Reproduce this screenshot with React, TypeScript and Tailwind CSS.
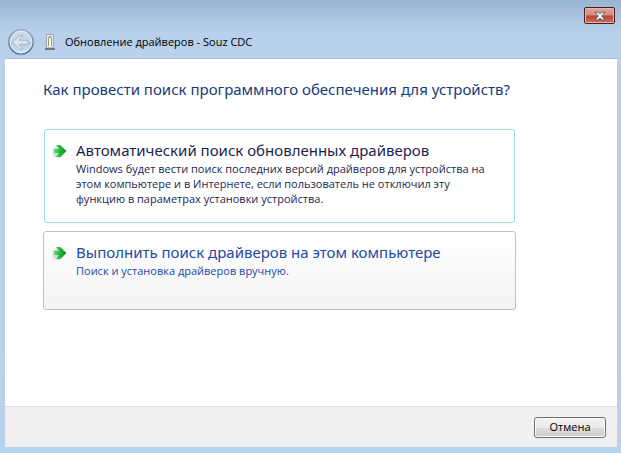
import type { ReactNode } from "react";

function BackIcon() {
  return (
    <svg viewBox="0 0 28 28" className="size-7" aria-hidden="true">
      <defs>
        <linearGradient id="orb" x1="0" y1="0" x2="0" y2="1">
          <stop offset="0" stopColor="#d3deea" />
          <stop offset="0.48" stopColor="#c3d3e5" />
          <stop offset="0.52" stopColor="#b2c8df" />
          <stop offset="1" stopColor="#d3e5f5" />
        </linearGradient>
        <linearGradient id="rim" x1="0" y1="0" x2="0" y2="1">
          <stop offset="0" stopColor="#8fa6c0" />
          <stop offset="1" stopColor="#4b617c" />
        </linearGradient>
      </defs>
      <circle cx="14" cy="14" r="13" fill="none" stroke="#a3bad3" strokeWidth="1" />
      <circle cx="14" cy="14" r="12" fill="url(#orb)" stroke="url(#rim)" strokeWidth="1.2" />
      <circle cx="14" cy="14" r="10.8" fill="none" stroke="#e2ecf6" strokeWidth="1" />
      <path
        d="M5.5 14.2 12.6 7.4h3.2l-4 4.9h9.4v3.9h-9.4l4 4.9h-3.2z"
        fill="#dce6f0"
        stroke="#9fb2c7"
        strokeWidth="0.9"
        strokeLinejoin="round"
      />
    </svg>
  );
}

function DeviceIcon() {
  return (
    <svg viewBox="0 0 10 16" className="h-4 w-[10px]" aria-hidden="true">
      <rect x="1.5" y="0.5" width="7" height="13" fill="#eeeeea" stroke="#a2a5a2" />
      <path d="M3.5 12V4.2Q3.5 2.5 5 2.5T6.5 4.2V12" fill="#fafaf6" stroke="#8d9a7c" />
      <path d="M4 3.2h2" stroke="#6fae4b" strokeWidth="1.2" />
      <path d="M1 13.5h8" stroke="#b9bbb9" />
      <path d="M0 15h10" stroke="#4d5257" strokeWidth="1.4" />
    </svg>
  );
}

function ArrowIcon() {
  return (
    <svg viewBox="0 0 18 18" className="mt-[2px] size-[18px] shrink-0" aria-hidden="true">
      <defs>
        <linearGradient id="green" x1="0" y1="0" x2="1" y2="0">
          <stop offset="0" stopColor="#5fe06a" />
          <stop offset="0.5" stopColor="#22b534" />
          <stop offset="1" stopColor="#0c8a1d" />
        </linearGradient>
        <radialGradient id="shade">
          <stop offset="0" stopColor="#c4cac4" />
          <stop offset="0.6" stopColor="#dcdfdc" />
          <stop offset="1" stopColor="#ffffff" stopOpacity="0" />
        </radialGradient>
      </defs>
      <circle cx="8" cy="10" r="8" fill="url(#shade)" />
      <path d="M4 7h5L6 3h4.2L16.5 9l-6.3 6H6l3-4H4z" fill="url(#green)" />
    </svg>
  );
}

function CommandLink({
  title,
  children,
  className,
}: {
  title: string;
  children: ReactNode;
  className: string;
}) {
  return (
    <button type="button" className={`flex items-start rounded-[3px] border pt-[10px] pr-4 text-left ${className}`}>
      <ArrowIcon />
      <span className="ml-2 block flex-1">
        <span className="block font-['Noto_Sans',sans-serif] text-[15px] leading-5">{title}</span>
        <span className="mt-px block text-[11px] leading-[15px]">{children}</span>
      </span>
    </button>
  );
}

export default function App() {
  return (
    <div className="flex min-h-screen flex-col bg-[linear-gradient(to_bottom,#98b4d1_0px,#b8d0eb_32px,#b9d1ea_440px,#b2d5f1_453px)] pr-1 pb-[6px] pl-[5px] font-['Open_Sans','Noto_Sans',sans-serif] text-black">
      <header>
        <div className="flex justify-end px-0.5 pt-[7px]">
          <button
            type="button"
            aria-label="Закрыть"
            className="flex h-[17px] w-[31px] items-center justify-center rounded-[2px] border border-[#4b1a22] bg-[linear-gradient(to_bottom,#e3a59b_0%,#d58a7e_48%,#b9432c_52%,#d0705c_100%)] shadow-[inset_0_0_0_1px_#e8b5ac]"
          >
            <svg viewBox="0 0 12 10" className="h-[10px] w-3" aria-hidden="true">
              <path
                d="M1 1h3.2L6 2.9 7.8 1H11L7.8 5 11 9H7.8L6 7.1 4.2 9H1l3.2-4z"
                fill="#f6f6f6"
                stroke="#535666"
                strokeWidth="0.9"
              />
            </svg>
          </button>
        </div>
        <div className="flex h-[34px] items-center pt-[2px] pl-[2px]">
          <button type="button" aria-label="Назад" className="size-7">
            <BackIcon />
          </button>
          <span className="ml-[10px]">
            <DeviceIcon />
          </span>
          <h1 className="ml-[10px] text-[11px] leading-4">Обновление драйверов - Souz CDC</h1>
        </div>
      </header>

      <main className="flex-1 border-t border-[#a5bdd6] bg-white pr-[101px] pl-[38px]">
        <h2 className="pt-5 font-['Noto_Sans',sans-serif] text-[15px] leading-5 whitespace-nowrap text-[#153a7a]">
          Как провести поиск программного обеспечения для устройств?
        </h2>
        <div className="mt-[30px] flex flex-col gap-2">
          <CommandLink
            title="Автоматический поиск обновленных драйверов"
            className="mx-px border-[#9adbe8] pb-4 pl-[5px] text-[#1c1f4e]"
          >
            Windows будет вести поиск последних версий драйверов для устройства на этом компьютере и в
            Интернете, если пользователь не отключил эту функцию в параметрах установки устройства.
          </CommandLink>
          <CommandLink
            title="Выполнить поиск драйверов на этом компьютере"
            className="border-[#c0c0c0] bg-linear-to-b from-white to-[#f3f3f3] pb-[31px] pl-[6px] text-[#1d4aa5]"
          >
            Поиск и установка драйверов вручную.
          </CommandLink>
        </div>
      </main>

      <footer className="flex h-[41px] items-center justify-end border-t border-[#dfdfdf] bg-[#f0f0f0] pr-[11px]">
        <button
          type="button"
          className="flex h-[21px] w-[72px] items-center justify-center rounded-[3px] border border-[#707070] bg-[linear-gradient(to_bottom,#f2f2f2_0%,#ebebeb_50%,#dddddd_50%,#cfcfcf_100%)] text-[11px] leading-4 shadow-[inset_0_0_0_1px_#fafafa]"
        >
          Отмена
        </button>
      </footer>
    </div>
  );
}
